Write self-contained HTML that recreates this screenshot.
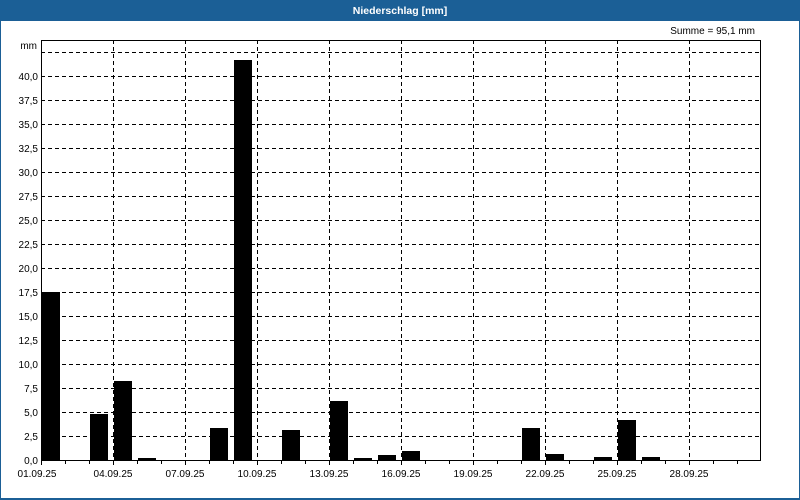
<!DOCTYPE html>
<html><head><meta charset="utf-8"><style>
html,body{margin:0;padding:0;background:#fff}
svg{display:block;font-family:"Liberation Sans",sans-serif}
</style></head><body>
<svg width="800" height="500" xmlns="http://www.w3.org/2000/svg">
<rect x="0" y="0" width="800" height="500" fill="#fff"/>
<rect x="0" y="0" width="800" height="21" fill="#1b5f96"/>
<rect x="0" y="0" width="1" height="500" fill="#1b5f96"/>
<rect x="799" y="0" width="1" height="500" fill="#1b5f96"/>
<rect x="0" y="498" width="800" height="2" fill="#1b5f96"/>
<text x="400" y="14" fill="#fff" font-size="10.5" font-weight="bold" text-anchor="middle">Niederschlag [mm]</text>
<text x="755" y="34" font-size="10" text-anchor="end" fill="#000">Summe = 95,1 mm</text>
<text x="37" y="49" font-size="10" text-anchor="end" fill="#000">mm</text>
<g stroke="#000" stroke-width="1" stroke-dasharray="4,3" shape-rendering="crispEdges">
<line x1="41" x2="760" y1="52.5" y2="52.5"/><line x1="41" x2="760" y1="76.5" y2="76.5"/><line x1="41" x2="760" y1="100.5" y2="100.5"/><line x1="41" x2="760" y1="124.5" y2="124.5"/><line x1="41" x2="760" y1="148.5" y2="148.5"/><line x1="41" x2="760" y1="172.5" y2="172.5"/><line x1="41" x2="760" y1="196.5" y2="196.5"/><line x1="41" x2="760" y1="220.5" y2="220.5"/><line x1="41" x2="760" y1="244.5" y2="244.5"/><line x1="41" x2="760" y1="268.5" y2="268.5"/><line x1="41" x2="760" y1="292.5" y2="292.5"/><line x1="41" x2="760" y1="316.5" y2="316.5"/><line x1="41" x2="760" y1="340.5" y2="340.5"/><line x1="41" x2="760" y1="364.5" y2="364.5"/><line x1="41" x2="760" y1="388.5" y2="388.5"/><line x1="41" x2="760" y1="412.5" y2="412.5"/><line x1="41" x2="760" y1="436.5" y2="436.5"/>
<line y1="40" y2="460" x1="113.5" x2="113.5"/><line y1="40" y2="460" x1="185.5" x2="185.5"/><line y1="40" y2="460" x1="257.5" x2="257.5"/><line y1="40" y2="460" x1="329.5" x2="329.5"/><line y1="40" y2="460" x1="401.5" x2="401.5"/><line y1="40" y2="460" x1="473.5" x2="473.5"/><line y1="40" y2="460" x1="545.5" x2="545.5"/><line y1="40" y2="460" x1="617.5" x2="617.5"/><line y1="40" y2="460" x1="689.5" x2="689.5"/>
</g>
<g fill="#000">
<rect x="42" y="292" width="18" height="168"/>
<rect x="90" y="414" width="18" height="46"/>
<rect x="114" y="381" width="18" height="79"/>
<rect x="138" y="458" width="18" height="2"/>
<rect x="210" y="428" width="18" height="32"/>
<rect x="234" y="60" width="18" height="400"/>
<rect x="282" y="430" width="18" height="30"/>
<rect x="330" y="401" width="18" height="59"/>
<rect x="354" y="458" width="18" height="2"/>
<rect x="378" y="455" width="18" height="5"/>
<rect x="402" y="451" width="18" height="9"/>
<rect x="522" y="428" width="18" height="32"/>
<rect x="546" y="454" width="18" height="6"/>
<rect x="594" y="457" width="18" height="3"/>
<rect x="618" y="420" width="18" height="40"/>
<rect x="642" y="457" width="18" height="3"/>
</g>
<rect x="41.5" y="40.5" width="719" height="420" fill="none" stroke="#000" stroke-width="1" shape-rendering="crispEdges"/>
<g stroke="#000" shape-rendering="crispEdges">
<line x1="41.5" x2="41.5" y1="460" y2="465"/><line x1="65.5" x2="65.5" y1="460" y2="464"/><line x1="89.5" x2="89.5" y1="460" y2="464"/><line x1="113.5" x2="113.5" y1="460" y2="465"/><line x1="137.5" x2="137.5" y1="460" y2="464"/><line x1="161.5" x2="161.5" y1="460" y2="464"/><line x1="185.5" x2="185.5" y1="460" y2="465"/><line x1="209.5" x2="209.5" y1="460" y2="464"/><line x1="233.5" x2="233.5" y1="460" y2="464"/><line x1="257.5" x2="257.5" y1="460" y2="465"/><line x1="281.5" x2="281.5" y1="460" y2="464"/><line x1="305.5" x2="305.5" y1="460" y2="464"/><line x1="329.5" x2="329.5" y1="460" y2="465"/><line x1="353.5" x2="353.5" y1="460" y2="464"/><line x1="377.5" x2="377.5" y1="460" y2="464"/><line x1="401.5" x2="401.5" y1="460" y2="465"/><line x1="425.5" x2="425.5" y1="460" y2="464"/><line x1="449.5" x2="449.5" y1="460" y2="464"/><line x1="473.5" x2="473.5" y1="460" y2="465"/><line x1="497.5" x2="497.5" y1="460" y2="464"/><line x1="521.5" x2="521.5" y1="460" y2="464"/><line x1="545.5" x2="545.5" y1="460" y2="465"/><line x1="569.5" x2="569.5" y1="460" y2="464"/><line x1="593.5" x2="593.5" y1="460" y2="464"/><line x1="617.5" x2="617.5" y1="460" y2="465"/><line x1="641.5" x2="641.5" y1="460" y2="464"/><line x1="665.5" x2="665.5" y1="460" y2="464"/><line x1="689.5" x2="689.5" y1="460" y2="465"/><line x1="713.5" x2="713.5" y1="460" y2="464"/><line x1="737.5" x2="737.5" y1="460" y2="464"/>
</g>
<g font-size="10" fill="#000" text-anchor="end">
<text x="38" y="80">40,0</text><text x="38" y="104">37,5</text><text x="38" y="128">35,0</text><text x="38" y="152">32,5</text><text x="38" y="176">30,0</text><text x="38" y="200">27,5</text><text x="38" y="224">25,0</text><text x="38" y="248">22,5</text><text x="38" y="272">20,0</text><text x="38" y="296">17,5</text><text x="38" y="320">15,0</text><text x="38" y="344">12,5</text><text x="38" y="368">10,0</text><text x="38" y="392">7,5</text><text x="38" y="416">5,0</text><text x="38" y="440">2,5</text><text x="38" y="464">0,0</text>
</g>
<g font-size="10" fill="#000" text-anchor="middle">
<text x="37" y="477">01.09.25</text><text x="113" y="477">04.09.25</text><text x="185" y="477">07.09.25</text><text x="257" y="477">10.09.25</text><text x="329" y="477">13.09.25</text><text x="401" y="477">16.09.25</text><text x="473" y="477">19.09.25</text><text x="545" y="477">22.09.25</text><text x="617" y="477">25.09.25</text><text x="689" y="477">28.09.25</text>
</g>
</svg>
</body></html>
